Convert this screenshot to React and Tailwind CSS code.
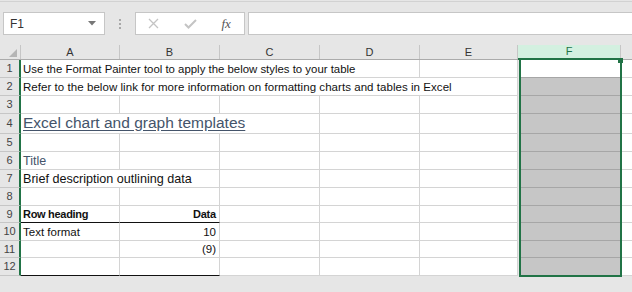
import React from "react";

const COLS = ["A", "B", "C", "D", "E"];

const rows = [
  { n: 1, h: "h-[18px]", spill: 3, a: <span className="text-[11.4px] text-[#111]">Use the Format Painter tool to apply the below styles to your table</span> },
  { n: 2, h: "h-[18px]", spill: 4, a: <span className="text-[11.5px] tracking-[0.05px] text-[#111]">Refer to the below link for more information on formatting charts and tables in Excel</span> },
  { n: 3, h: "h-[18px]", spill: 0 },
  { n: 4, h: "h-[20px]", spill: 2, a: <span className="text-[15.5px] text-[#44546a] underline underline-offset-2">Excel chart and graph templates</span> },
  { n: 5, h: "h-[18px]", spill: 0 },
  { n: 6, h: "h-[18px]", spill: 0, a: <span className="text-[12.5px] text-[#44546a]">Title</span> },
  { n: 7, h: "h-[18px]", spill: 1, a: <span className="text-[12.6px] text-[#111]">Brief description outlining data</span> },
  { n: 8, h: "h-[18px]", spill: 0 },
  { n: 9, h: "h-[17px]", spill: 0, black: true, a: <span className="text-[11px] font-bold tracking-[-0.3px] text-[#111]">Row heading</span>, b: <span className="text-[11px] font-bold tracking-[-0.2px] text-[#111]">Data</span> },
  { n: 10, h: "h-[18px]", spill: 0, a: <span className="text-[11.5px] text-[#111]">Text format</span>, b: <span className="text-[11.5px] text-[#111]">10</span> },
  { n: 11, h: "h-[17px]", spill: 0, b: <span className="text-[11.5px] text-[#111]">(9)</span> },
  { n: 12, h: "h-[18px]", spill: 0, black: true },
];

function Row({ r }) {
  const last = r.n === 12;
  return (
    <div className={`flex ${r.h}`}>
      <div className="w-[21px] shrink-0 bg-[#e6e6e6] border-r-2 border-r-[#217346] border-b border-b-[#c6c6c6] flex items-center justify-center text-[11px] text-[#444]">
        {r.n}
      </div>
      {COLS.map((c, i) => {
        const noRight = i < r.spill;
        const blackBottom = r.black && i < 2;
        return (
          <div
            key={c}
            className={`shrink-0 bg-white flex items-center pb-[2px] ${noRight ? "" : "border-r border-r-[#d4d4d4]"} ${blackBottom ? "border-b border-b-[#111]" : "border-b border-b-[#d4d4d4]"} ${i === 4 ? "w-[98px]" : i === 0 ? "w-[99px]" : "w-[100px]"}`}
          >
            {i === 0 && r.a ? <div className="pl-[2px] whitespace-nowrap relative z-10">{r.a}</div> : null}
            {i === 1 && r.b ? <div className="w-full pr-[3px] text-right whitespace-nowrap">{r.b}</div> : null}
          </div>
        );
      })}
      <div className={`w-[101px] shrink-0 ml-[2px] ${r.n === 1 ? "bg-white border-b border-b-[#a6a6a6]" : last ? "bg-[#c6c6c6] border-b border-b-white" : "bg-[#c6c6c6] border-b border-b-[#a6a6a6]"}`} />
      <div className="flex-1 bg-white border-b border-b-[#d4d4d4]" />
    </div>
  );
}

export default function App() {
  return (
    <div className="w-[632px] h-[292px] bg-[#e6e6e6] overflow-hidden relative" style={{ fontFamily: '"Liberation Sans", Arial, sans-serif' }}>
      {/* toolbar */}
      <div className="h-[44px] mt-[1px] border-t border-t-[#d2d2d2] pt-[10px] flex items-start">
        <div className="ml-[3px] w-[102px] h-[23px] bg-white border border-[#c6c6c6] flex items-center justify-between pl-[6px] pr-[8px]">
          <span className="text-[12px] text-[#333]">F1</span>
          <svg width="8" height="5" viewBox="0 0 8 5"><path d="M0 0 L8 0 L4 4.5 Z" fill="#777" /></svg>
        </div>
        <div className="w-[30px] h-[23px] flex flex-col items-center justify-center gap-[2px]">
          <span className="w-[2px] h-[2px] bg-[#a8a8a8]" />
          <span className="w-[2px] h-[2px] bg-[#a8a8a8]" />
          <span className="w-[2px] h-[2px] bg-[#a8a8a8]" />
        </div>
        <div className="w-[110px] h-[23px] bg-white border border-[#c6c6c6] flex">
          <div className="w-[36px] flex items-center justify-center">
            <svg width="11" height="11" viewBox="0 0 11 11"><path d="M1 1 L10 10 M10 1 L1 10" stroke="#c4c4c4" strokeWidth="1.3" /></svg>
          </div>
          <div className="w-[37px] flex items-center justify-center">
            <svg width="13" height="10" viewBox="0 0 13 10"><path d="M1 5 L4.5 8.5 L12 1" stroke="#c4c4c4" strokeWidth="2" fill="none" /></svg>
          </div>
          <div className="w-[36px] flex items-center justify-center">
            <span className="text-[13px] italic text-[#555]" style={{ fontFamily: '"Liberation Serif", serif' }}>fx</span>
          </div>
        </div>
        <div className="ml-[3px] flex-1 h-[23px] bg-white border border-[#c6c6c6] border-r-0" />
      </div>

      {/* column header */}
      <div className="flex h-[15px] border-b border-b-[#ababab]">
        <div className="w-[21px] shrink-0 border-r border-r-[#c6c6c6] relative">
          <svg className="absolute right-[3px] bottom-[2px]" width="8" height="8" viewBox="0 0 8 8"><path d="M8 0 L8 8 L0 8 Z" fill="#b5b5b5" /></svg>
        </div>
        {COLS.map((c, i) => (
          <div key={c} className={`${i === 4 ? "w-[98px]" : i === 0 ? "w-[99px]" : "w-[100px]"} shrink-0 border-r border-r-[#c6c6c6] flex items-center justify-center text-[11px] text-[#333]`}>
            {c}
          </div>
        ))}
        <div className="w-[103px] shrink-0 bg-[#d3f0e0] border-r border-r-[#c6c6c6] border-b-2 border-b-[#217346] -mb-[1px] flex items-center justify-center text-[11px] text-[#217346]">
          F
        </div>
        <div className="flex-1" />
      </div>

      {/* grid */}
      <div>
        {rows.map((r) => (
          <Row key={r.n} r={r} />
        ))}
      </div>

      {/* selection overlay */}
      <div className="absolute left-[519px] top-[58px] w-[103px] h-[219px] border-2 border-[#217346] pointer-events-none" />
      <div className="absolute left-[618px] top-[58px] w-[5px] h-[5px] bg-[#217346]" />
    </div>
  );
}
